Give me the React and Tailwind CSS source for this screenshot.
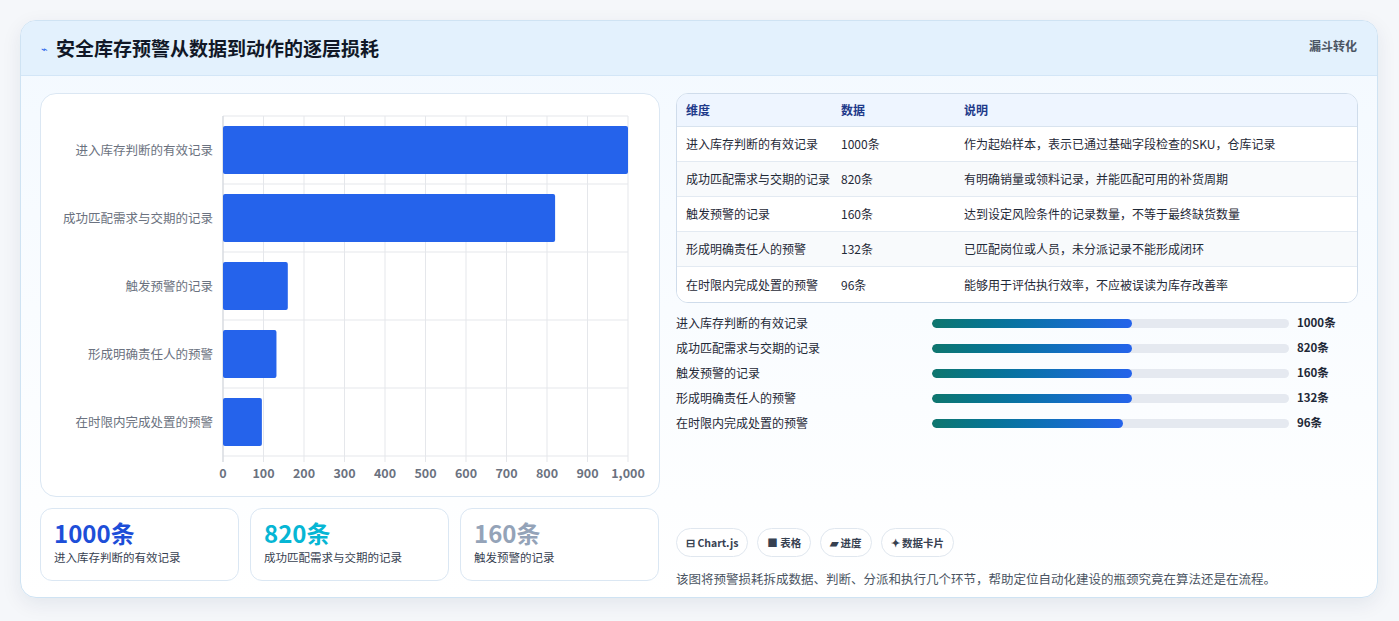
const F = { fontFamily: '"Noto Sans CJK SC", "Noto Sans", sans-serif' };
const data = [
  ["进入库存判断的有效记录", 1000, "作为起始样本，表示已通过基础字段检查的SKU，仓库记录"],
  ["成功匹配需求与交期的记录", 820, "有明确销量或领料记录，并能匹配可用的补货周期"],
  ["触发预警的记录", 160, "达到设定风险条件的记录数量，不等于最终缺货数量"],
  ["形成明确责任人的预警", 132, "已匹配岗位或人员，未分派记录不能形成闭环"],
  ["在时限内完成处置的预警", 96, "能够用于评估执行效率，不应被误读为库存改善率"],
];
const bw = ["56%", "56%", "56%", "56%", "53.5%"];

function Chart() {
  const x0 = 182, w = 405, top = 22, rowH = 68;
  return (
    <svg width="619" height="403" style={F}>
      {Array.from({ length: 11 }).map((_, i) => (
        <g key={i}>
          <line x1={x0 + i * 40.5} x2={x0 + i * 40.5} y1={top} y2={top + 5 * rowH + 6} stroke="#e5e7eb" />
          <text x={x0 + i * 40.5} y={384} fontSize="12.5" fill="#6b7280" textAnchor="middle" fontWeight="600">{i === 10 ? "1,000" : i * 100}</text>
        </g>
      ))}
      {Array.from({ length: 6 }).map((_, i) => (
        <line key={i} x1={x0} x2={x0 + w} y1={top + i * rowH} y2={top + i * rowH} stroke="#e5e7eb" />
      ))}
      <line x1={x0} x2={x0} y1={top} y2={top + 5 * rowH + 6} stroke="#d1d5db" />
      {data.map(([l, v], i) => (
        <g key={l}>
          <rect x={x0} y={top + i * rowH + 10} width={(v / 1000) * w} height={48} rx="2" fill="#2563eb" />
          <text x={172} y={top + i * rowH + 39} fontSize="12.5" fill="#6b7280" textAnchor="end">{l}</text>
        </g>
      ))}
    </svg>
  );
}

export default function App() {
  return (
    <div className="w-[1399px] h-[621px] bg-[#f5f7fa] pt-[20px] px-[20px]" style={F}>
      <div className="w-[1358px] h-[578px] rounded-2xl border border-[#cfe3f3] bg-gradient-to-b from-[#f3f9ff] to-white shadow-[0_6px_20px_rgba(15,40,80,0.08)] overflow-hidden">
        <div className="h-[55px] bg-[#e3f1fd] border-b border-[#d3e6f7] flex items-start justify-between px-[20px]">
          <div className="flex items-center gap-2 h-[55px]">
            <span className="text-[#2563eb] text-[11px]">⌁</span>
            <span className="text-[19px] font-bold text-[#111827]">安全库存预警从数据到动作的逐层损耗</span>
          </div>
          <span className="text-[12px] font-semibold text-[#4b5563] mt-[16px]">漏斗转化</span>
        </div>
        <div className="flex gap-[16px] px-[19px] pt-[17px]">
          <div className="w-[620px] flex flex-col gap-[11px]">
            <div className="h-[404px] rounded-2xl border border-[#dbe7f3] bg-white overflow-hidden"><Chart /></div>
            <div className="flex gap-[11px]">
              {[["1000条", "text-[#1d4ed8]"], ["820条", "text-[#06b6d4]"], ["160条", "text-[#94a3b8]"]].map(([n, c], i) => (
                <div key={n} className="w-[199px] h-[73px] rounded-xl border border-[#dbe7f3] bg-white px-[13px] pt-[8px]">
                  <div className={`text-[24px] font-bold leading-[32px] ${c}`}>{n}</div>
                  <div className="text-[11.5px] text-[#374151]">{data[i][0]}</div>
                </div>
              ))}
            </div>
          </div>
          <div className="w-[686px] flex flex-col">
            <div className="rounded-xl border border-[#cfdceb] overflow-hidden bg-white">
              <div className="flex h-[33px] items-center bg-[#eef5ff] text-[12px] font-semibold text-[#1e3a8a] border-b border-[#d8e3ef]">
                <span className="w-[164px] pl-[9px]">维度</span><span className="w-[123px]">数据</span><span>说明</span>
              </div>
              {data.map(([l, v, d], i) => (
                <div key={l} className={`flex h-[35px] items-center text-[12px] text-[#1f2937] ${i < 4 ? "border-b border-[#e3eaf2]" : ""} ${i % 2 ? "bg-[#f8fafc]" : "bg-white"}`}>
                  <span className="w-[164px] pl-[9px]">{l}</span><span className="w-[123px]">{v}条</span><span>{d}</span>
                </div>
              ))}
            </div>
            <div className="flex flex-col gap-[7px] mt-[11px]">
              {data.map(([l, v], i) => (
                <div key={l} className="flex items-center h-[18px] text-[12px] text-[#1f2937]">
                  <span className="w-[256px]">{l}</span>
                  <div className="w-[357px] h-[9px] rounded-full bg-[#e5e9f0] overflow-hidden">
                    <div className="h-full rounded-full bg-gradient-to-r from-[#0f766e] to-[#2563eb]" style={{ width: bw[i] }} />
                  </div>
                  <span className="ml-[8px] font-bold text-[11.5px]">{v}条</span>
                </div>
              ))}
            </div>
            <div className="flex gap-[9px] mt-[96px]">
              {["⊟ Chart.js", "■ 表格", "▰ 进度", "✦ 数据卡片"].map((t) => (
                <span key={t} className="h-[29px] px-[9px] rounded-full border border-[#e0e7ef] bg-white text-[10.5px] font-semibold text-[#374151] flex items-center">{t}</span>
              ))}
            </div>
            <div className="mt-[13px] text-[12.5px] text-[#4b5563]">该图将预警损耗拆成数据、判断、分派和执行几个环节，帮助定位自动化建设的瓶颈究竟在算法还是在流程。</div>
          </div>
        </div>
      </div>
    </div>
  );
}
